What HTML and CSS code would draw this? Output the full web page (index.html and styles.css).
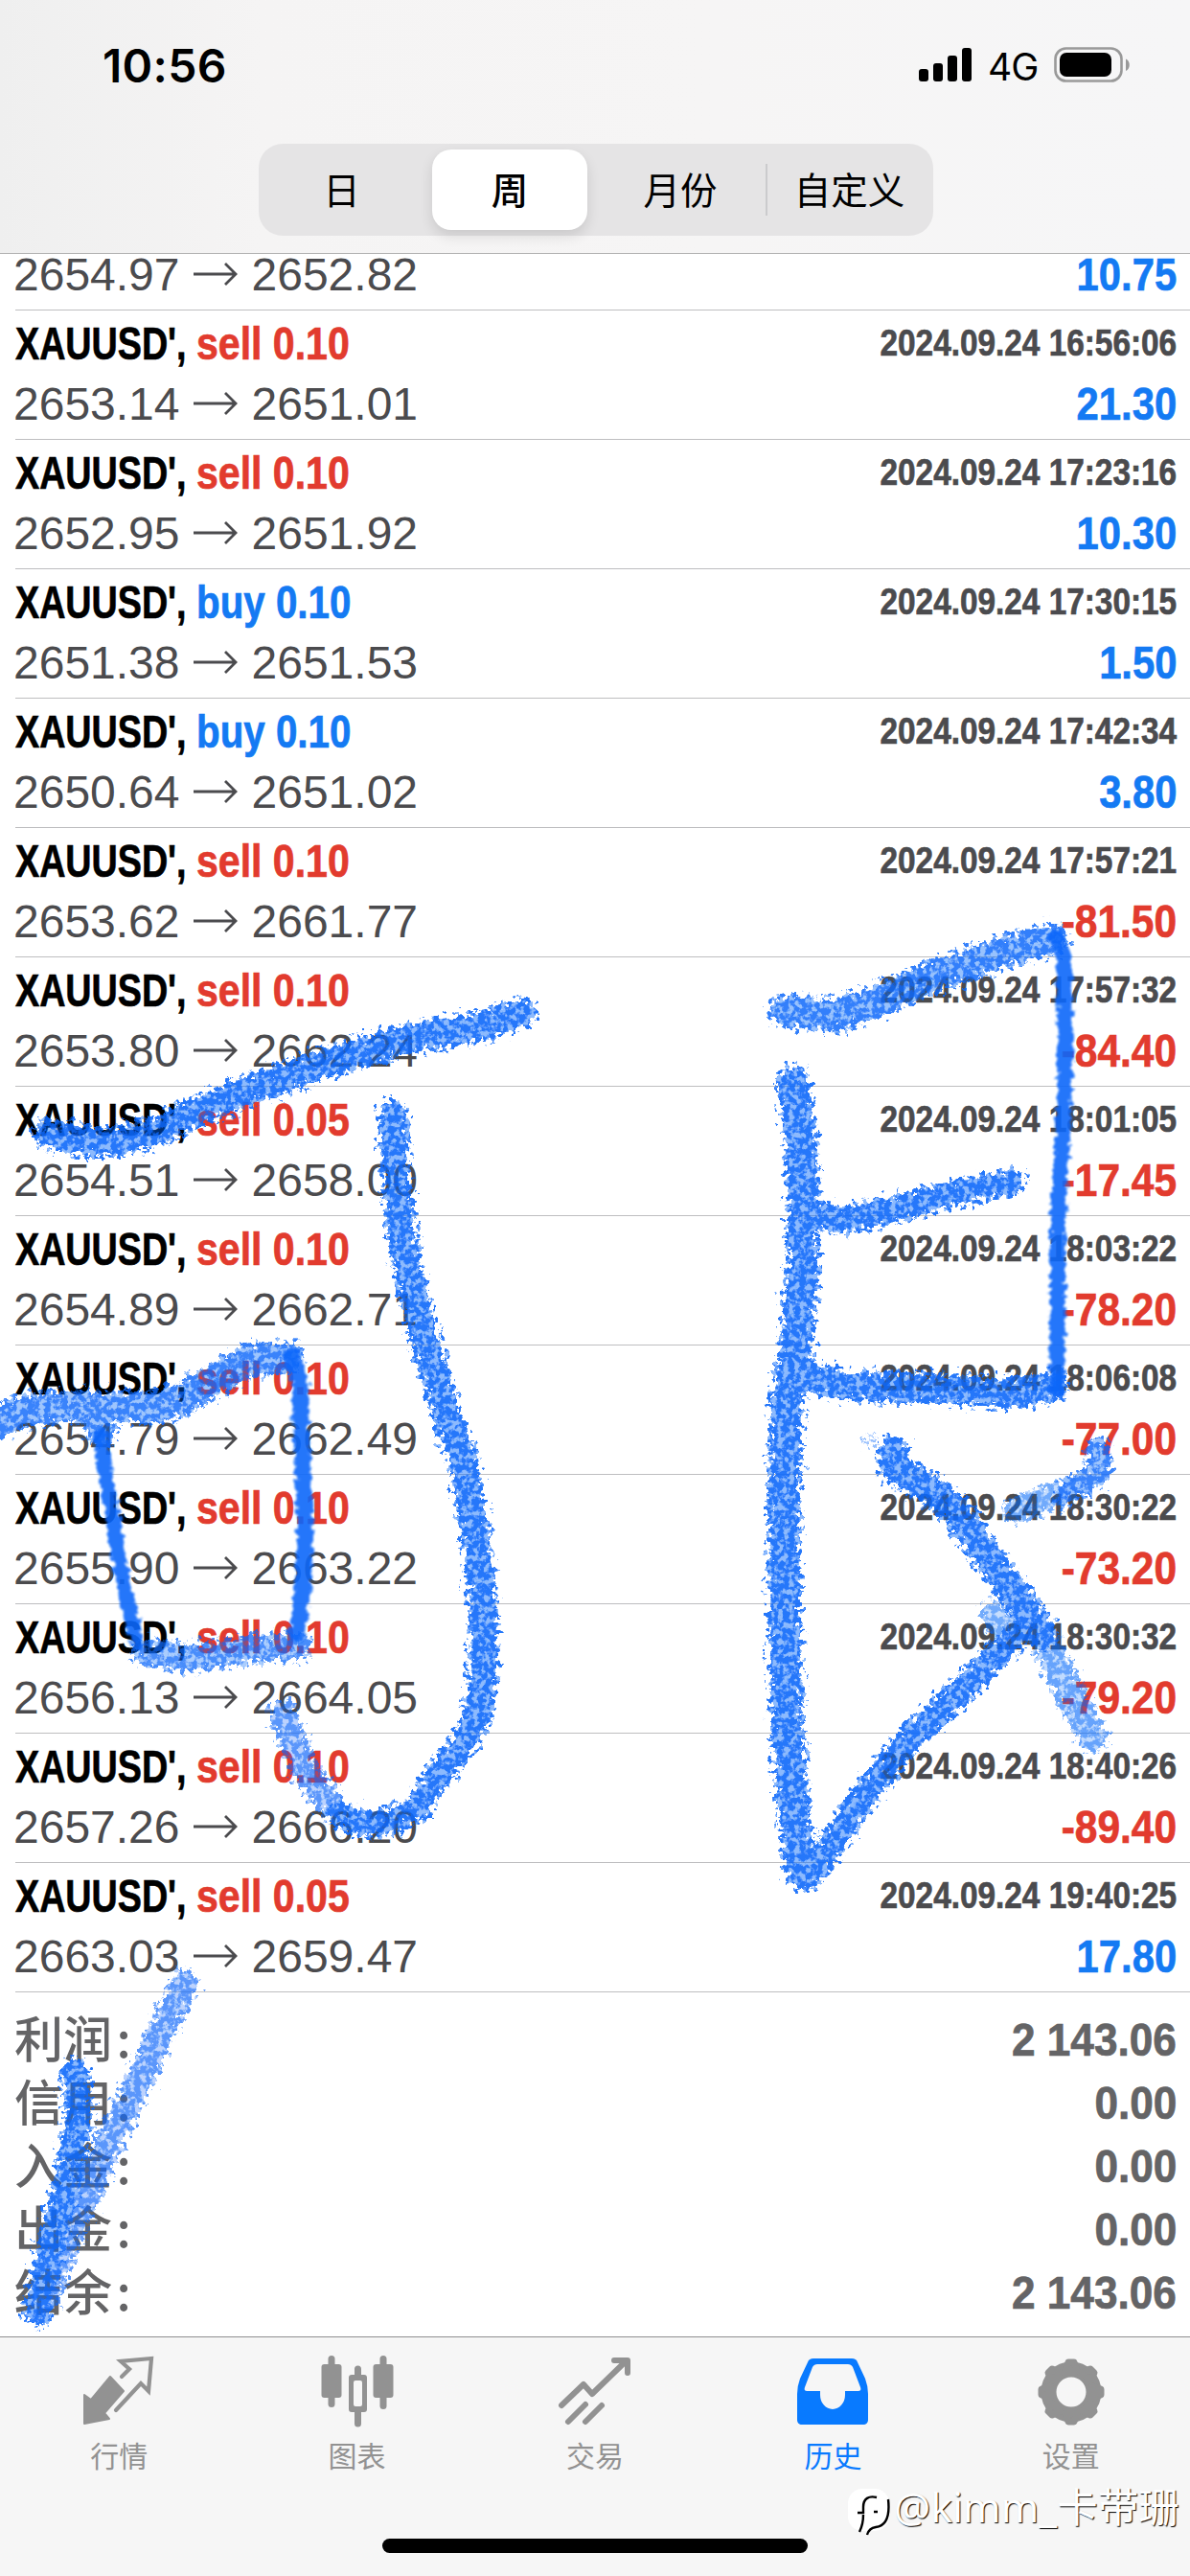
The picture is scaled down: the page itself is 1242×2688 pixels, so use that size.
FILE: index.html
```html
<!DOCTYPE html>
<html lang="zh-CN">
  <head>
    <meta charset="UTF-8" />
    <meta name="viewport" content="width=device-width, initial-scale=1.0" />
    <title>历史</title>
    <link rel="stylesheet" href="styles.css">
  </head>
  <body>
    <div class="screen">
      <header class="header">
        <div class="status-bar">
          <span class="time">10:56</span>
          <div class="status-icons">
            <svg class="signal" viewBox="0 0 56 36">
              <rect x="0" y="22" width="10" height="13" rx="3" />
              <rect x="15" y="16" width="10" height="19" rx="3" />
              <rect x="30" y="8" width="10" height="27" rx="3" />
              <rect x="45" y="0" width="10" height="35" rx="3" />
            </svg>
            <span class="network">4G</span>
            <svg class="battery" viewBox="0 0 80 38">
              <rect x="1.5" y="1.5" width="69" height="34" rx="11" fill="none" stroke="#999" stroke-width="2.6" />
              <rect x="6" y="6" width="54" height="25" rx="7" />
              <path d="M75 12.5c5 2 5 10.500 0 12.500z" fill="#999" />
            </svg>
          </div>
        </div>
        <div class="segments">
          <div class="segment">日</div>
          <div class="segment active">周</div>
          <div class="segment">月份</div>
          <div class="segment divided">自定义</div>
        </div>
      </header>

      <main class="history">
        <div class="deal deal-cut">
          <div class="line">
            <span class="prices">2654.97<svg class="arrow" viewBox="0 0 48 24"><path d="M1 12h44M34 1l11 11-11 11" /></svg>2652.82</span>
            <span class="profit">10.75</span>
          </div>
        </div>
        <div class="deal">
          <div class="line"><span class="symbol">XAUUSD',</span><span class="side sell">sell 0.10</span><span class="date">2024.09.24 16:56:06</span></div>
          <div class="line"><span class="prices">2653.14<svg class="arrow" viewBox="0 0 48 24"><path d="M1 12h44M34 1l11 11-11 11" /></svg>2651.01</span><span class="profit">21.30</span></div>
        </div>
        <div class="deal">
          <div class="line"><span class="symbol">XAUUSD',</span><span class="side sell">sell 0.10</span><span class="date">2024.09.24 17:23:16</span></div>
          <div class="line"><span class="prices">2652.95<svg class="arrow" viewBox="0 0 48 24"><path d="M1 12h44M34 1l11 11-11 11" /></svg>2651.92</span><span class="profit">10.30</span></div>
        </div>
        <div class="deal">
          <div class="line"><span class="symbol">XAUUSD',</span><span class="side buy">buy 0.10</span><span class="date">2024.09.24 17:30:15</span></div>
          <div class="line"><span class="prices">2651.38<svg class="arrow" viewBox="0 0 48 24"><path d="M1 12h44M34 1l11 11-11 11" /></svg>2651.53</span><span class="profit">1.50</span></div>
        </div>
        <div class="deal">
          <div class="line"><span class="symbol">XAUUSD',</span><span class="side buy">buy 0.10</span><span class="date">2024.09.24 17:42:34</span></div>
          <div class="line"><span class="prices">2650.64<svg class="arrow" viewBox="0 0 48 24"><path d="M1 12h44M34 1l11 11-11 11" /></svg>2651.02</span><span class="profit">3.80</span></div>
        </div>
        <div class="deal">
          <div class="line"><span class="symbol">XAUUSD',</span><span class="side sell">sell 0.10</span><span class="date">2024.09.24 17:57:21</span></div>
          <div class="line"><span class="prices">2653.62<svg class="arrow" viewBox="0 0 48 24"><path d="M1 12h44M34 1l11 11-11 11" /></svg>2661.77</span><span class="profit loss">-81.50</span></div>
        </div>
        <div class="deal">
          <div class="line"><span class="symbol">XAUUSD',</span><span class="side sell">sell 0.10</span><span class="date">2024.09.24 17:57:32</span></div>
          <div class="line"><span class="prices">2653.80<svg class="arrow" viewBox="0 0 48 24"><path d="M1 12h44M34 1l11 11-11 11" /></svg>2662.24</span><span class="profit loss">-84.40</span></div>
        </div>
        <div class="deal">
          <div class="line"><span class="symbol">XAUUSD',</span><span class="side sell">sell 0.05</span><span class="date">2024.09.24 18:01:05</span></div>
          <div class="line"><span class="prices">2654.51<svg class="arrow" viewBox="0 0 48 24"><path d="M1 12h44M34 1l11 11-11 11" /></svg>2658.00</span><span class="profit loss">-17.45</span></div>
        </div>
        <div class="deal">
          <div class="line"><span class="symbol">XAUUSD',</span><span class="side sell">sell 0.10</span><span class="date">2024.09.24 18:03:22</span></div>
          <div class="line"><span class="prices">2654.89<svg class="arrow" viewBox="0 0 48 24"><path d="M1 12h44M34 1l11 11-11 11" /></svg>2662.71</span><span class="profit loss">-78.20</span></div>
        </div>
        <div class="deal">
          <div class="line"><span class="symbol">XAUUSD',</span><span class="side sell">sell 0.10</span><span class="date">2024.09.24 18:06:08</span></div>
          <div class="line"><span class="prices">2654.79<svg class="arrow" viewBox="0 0 48 24"><path d="M1 12h44M34 1l11 11-11 11" /></svg>2662.49</span><span class="profit loss">-77.00</span></div>
        </div>
        <div class="deal">
          <div class="line"><span class="symbol">XAUUSD',</span><span class="side sell">sell 0.10</span><span class="date">2024.09.24 18:30:22</span></div>
          <div class="line"><span class="prices">2655.90<svg class="arrow" viewBox="0 0 48 24"><path d="M1 12h44M34 1l11 11-11 11" /></svg>2663.22</span><span class="profit loss">-73.20</span></div>
        </div>
        <div class="deal">
          <div class="line"><span class="symbol">XAUUSD',</span><span class="side sell">sell 0.10</span><span class="date">2024.09.24 18:30:32</span></div>
          <div class="line"><span class="prices">2656.13<svg class="arrow" viewBox="0 0 48 24"><path d="M1 12h44M34 1l11 11-11 11" /></svg>2664.05</span><span class="profit loss">-79.20</span></div>
        </div>
        <div class="deal">
          <div class="line"><span class="symbol">XAUUSD',</span><span class="side sell">sell 0.10</span><span class="date">2024.09.24 18:40:26</span></div>
          <div class="line"><span class="prices">2657.26<svg class="arrow" viewBox="0 0 48 24"><path d="M1 12h44M34 1l11 11-11 11" /></svg>2666.20</span><span class="profit loss">-89.40</span></div>
        </div>
        <div class="deal">
          <div class="line"><span class="symbol">XAUUSD',</span><span class="side sell">sell 0.05</span><span class="date">2024.09.24 19:40:25</span></div>
          <div class="line"><span class="prices">2663.03<svg class="arrow" viewBox="0 0 48 24"><path d="M1 12h44M34 1l11 11-11 11" /></svg>2659.47</span><span class="profit">17.80</span></div>
        </div>

        <div class="summary">
          <div class="total"><span>利润 :</span><b>2 143.06</b></div>
          <div class="total"><span>信用 :</span><b>0.00</b></div>
          <div class="total"><span>入金 :</span><b>0.00</b></div>
          <div class="total"><span>出金 :</span><b>0.00</b></div>
          <div class="total"><span>结余 :</span><b>2 143.06</b></div>
        </div>
      </main>

      <footer class="footer">
        <nav class="tabs">
          <div class="tab">
            <svg class="icon" viewBox="0 0 76 76">
              <path d="M2 41l7 5 20-24 14 15-20 23 5 6-26 5z" fill="currentColor" stroke="currentColor" stroke-width="2" stroke-linejoin="round" />
              <path d="M41 22l8-8-9-8 32-3-3 34-8-8-26 28" fill="none" stroke="currentColor" stroke-width="4.200" stroke-linecap="round" />
            </svg>
            <span>行情</span>
          </div>
          <div class="tab">
            <svg class="icon" viewBox="0 0 76 76">
              <g fill="currentColor">
                <rect x="0.500" y="9" width="21" height="35" rx="3" />
                <rect x="7.500" y="0" width="7" height="54" rx="3.500" />
                <rect x="54.500" y="9" width="21" height="35" rx="3" />
                <rect x="61.500" y="0" width="7" height="56" rx="3.500" />
                <path d="M35 20v-6a3.500 3.500 0 0 1 7 0v6h3a3 3 0 0 1 3 3v33a3 3 0 0 1-3 3h-3v12a3.500 3.500 0 0 1-7 0v-12h-3a3 3 0 0 1-3-3v-33a3 3 0 0 1 3-3zm-1 8v23a2 2 0 0 0 2 2h5a2 2 0 0 0 2-2v-23a2 2 0 0 0-2-2h-5a2 2 0 0 0-2 2z" fill-rule="evenodd" />
              </g>
            </svg>
            <span>图表</span>
          </div>
          <div class="tab">
            <svg class="icon" viewBox="0 0 76 76">
              <g fill="none" stroke="currentColor" stroke-width="6" stroke-linecap="round" stroke-linejoin="round">
                <path d="M3 52l23-22 9 10 34-33" />
                <path d="M58 5h14v13" />
                <path d="M10 69l18-18M28 69l17-17" />
              </g>
            </svg>
            <span>交易</span>
          </div>
          <div class="tab active">
            <svg class="icon" viewBox="0 0 76 76">
              <path fill="currentColor" fill-rule="evenodd" d="M18 3h40c3 0 5 1 6 4l8 17q3 8 3 16v27c0 3-2 5-5 5H6c-3 0-5-2-5-5V40q0-8 3-16l8-17c1-3 3-4 6-4zM22 9c-2 0-4 1-5 3L9 33c-1 3 0 4 3 4h13v4a13 15 0 0 0 26 0v-4h13c3 0 4-1 3-4l-8-21c-1-2-3-3-5-3z" />
            </svg>
            <span>历史</span>
          </div>
          <div class="tab">
            <svg class="icon" viewBox="0 0 76 76">
              <g fill="none" stroke="currentColor">
                <circle cx="38" cy="38" r="23.500" stroke-width="16" />
                <path d="M35 7h6l3 9H32zM35 69h6l3-9H32zM7 35v6l9 3V32zM69 35v6l-9 3V32zM14 18l4-4 8 4-8 8zM62 58l-4 4-8-4 8-8zM14 58l4 4 8-4-8-8zM62 18l-4-4-8 4 8 8z" fill="currentColor" stroke-width="7" stroke-linejoin="round" />
              </g>
            </svg>
            <span>设置</span>
          </div>
        </nav>
        <div class="home-indicator"></div>
      </footer>

      <div class="watermark">
        <svg class="mark" viewBox="0 0 46 52">
          <rect x="1" y="2" width="43" height="44" rx="15" fill="#fff" />
          <path d="M43 13q3 27-13 29-7 1-9 8M31 11c-8-2-14 1-14 10v6h-6M17 29q0 10-4 18M28 26h4" />
        </svg>
        <span>@kimm_卡带珊</span>
      </div>

      <!-- crayon marks over the list -->
      <svg class="crayon" viewBox="0 0 1242 2688">
        <defs>
          <filter id="chalk" filterUnits="userSpaceOnUse" x="0" y="900" width="1242" height="1560">
            <feTurbulence type="fractalNoise" baseFrequency="0.17" numOctaves="3" seed="4" result="noise" />
            <feDisplacementMap in="SourceGraphic" in2="noise" scale="26" xChannelSelector="R" yChannelSelector="G" result="rough" />
            <feColorMatrix in="noise" type="matrix" values="0 0 0 0 0  0 0 0 0 0  0 0 0 0 0  0 0 0 6 -2.2" result="grain" />
            <feComposite in="rough" in2="grain" operator="in" result="dots" />
            <feComponentTransfer in="rough" result="wash">
              <feFuncA type="linear" slope="0.5" />
            </feComponentTransfer>
            <feMerge result="marks">
              <feMergeNode in="wash" />
              <feMergeNode in="dots" />
            </feMerge>
            <feGaussianBlur in="marks" stdDeviation="0.7" />
          </filter>
          <filter id="press" filterUnits="userSpaceOnUse" x="0" y="900" width="1242" height="1560">
            <feTurbulence type="fractalNoise" baseFrequency="0.17" numOctaves="2" seed="9" result="noise" />
            <feDisplacementMap in="SourceGraphic" in2="noise" scale="12" xChannelSelector="R" yChannelSelector="G" result="rough" />
            <feGaussianBlur in="rough" stdDeviation="0.8" />
          </filter>
        </defs>
        <g filter="url(#chalk)">
          <path stroke-width="31" d="M52 1183L85 1190 119 1191 166 1180 205 1160 246 1143 337 1110 432 1083 500 1072 544 1057" />
          <path stroke-width="30" d="M410 1163L412 1217 420 1290 430 1345 442 1390 467 1480 483 1523 495 1594 505 1684 503 1766 496 1797" />
          <path stroke-width="27" d="M496 1797L478 1827 455 1855 437 1885 410 1900 380 1905 355 1893" />
          <path stroke-width="28" opacity=".65" d="M349 1888L320 1850 295 1788" />
          <path stroke-width="33" opacity=".85" d="M0 1482L35 1470 79 1467 158 1469 190 1460 222 1441 260 1420 300 1416M104 1475L106 1492" />
          <path stroke-width="28" opacity=".75" d="M152 1724L198 1730 253 1722 311 1717" />
          <path stroke-width="33" opacity=".9" d="M819 1055L873 1060 920 1042 980 1017 1040 996 1098 980" />
          <path stroke-width="34" d="M828 1130L836 1190 838 1257 838 1323 829 1423 821 1461 818 1583 819 1690 821 1797 829 1897 837 1955" />
          <path stroke-width="27" d="M845 1957L870 1922 900 1876 953 1811 1007 1761 1060 1706" />
          <path stroke-width="32" d="M932 1514L935 1533 967 1552 997 1576 1027 1619 1063 1669 1087 1704" />
          <path stroke-width="31" opacity=".55" d="M1087 1704L1107 1747 1141 1814" />
          <path stroke-width="25" opacity=".85" d="M1146 1512L1147 1536 1113 1558" />
          <path stroke-width="27" opacity=".5" d="M1113 1558L1060 1575M1036 1684L1054 1708" />
          <path stroke-width="27" d="M845 1262L873 1274 930 1263 997 1245 1056 1233" />
          <path stroke-width="31" d="M830 1433L880 1446 1000 1450 1063 1454 1099 1446" />
          <path stroke-width="29" d="M78 2162L82 2207 71 2273 53 2340 39 2413" />
          <path stroke-width="28" opacity=".65" d="M193 2069L170 2117 147 2167 115 2233 91 2290 62 2357 47 2400" />
          <path stroke-width="6" opacity=".35" d="M899 1501l3 3M909 1499l2 2M907 1507l1 1" />
        </g>
        <g filter="url(#press)">
          <path stroke-width="17" d="M304 1414L313 1440 314 1487 319 1594 316 1659 310 1705" />
          <path stroke-width="15" d="M104 1498L113 1555 126 1637 143 1712" />
          <path stroke-width="16" d="M1103 978L1111 1000 1112 1107 1109 1190 1104 1273 1104 1357 1103 1450" />
        </g>
      </svg>
    </div>
  </body>
</html>
```

FILE: styles.css
```css
* {
  margin: 0;
  padding: 0;
  box-sizing: border-box;
}

body {
  background: #fff;
  font-family: "Liberation Sans", "Noto Sans CJK SC", sans-serif;
  color: #000;
}

.screen {
  position: relative;
  display: flex;
  flex-direction: column;
  width: 1242px;
  height: 2688px;
  overflow: hidden;
}

/* Header */
.header {
  height: 265px;
  background: linear-gradient(90deg, #efefef 0, #f5f4f4 22%, #f6f5f5 60%, #f6f6f7 100%);
  border-bottom: 1px solid #b2b2b2;
}

.status-bar {
  display: flex;
  justify-content: space-between;
  height: 150px;
  padding: 38px 62px 0 107px;
}

.time {
  font-family: Inter, sans-serif;
  font-size: 48px;
  font-weight: 600;
  line-height: 62px;
  letter-spacing: 0.3px;
}

.status-icons {
  display: flex;
  align-items: flex-start;
}

.signal {
  width: 56px;
  height: 36px;
  margin-top: 12px;
}

.network {
  width: 54px;
  margin: 2px 15px 0 16px;
  font-family: Inter, sans-serif;
  font-size: 39px;
  font-weight: 400;
  line-height: 60px;
  letter-spacing: -1px;
}

.battery {
  width: 80px;
  height: 38px;
  margin-top: 11px;
}

.segments {
  display: grid;
  grid-template-columns: 173px 178px 178px 1fr;
  width: 704px;
  height: 96px;
  margin-left: 270px;
  padding: 6px 0;
  border-radius: 25px;
  background: #e5e4e5;
}

.segment {
  display: flex;
  align-items: center;
  justify-content: center;
  height: 84px;
  padding-bottom: 4px;
  font-family: "Noto Sans CJK SC", sans-serif;
  font-size: 38.5px;
  line-height: 80px;
}

.segment.active {
  margin: 0 8px;
  border-radius: 20px;
  background: #fff;
  box-shadow: 0 6px 14px rgba(0, 0, 0, 0.12);
  font-weight: 500;
}

.segment.divided {
  background: linear-gradient(#cbcbcd, #cbcbcd) 0 15px / 2px 54px no-repeat;
}

/* Deals */
.history {
  height: 2173px;
  padding-left: 16px;
}

.deal {
  height: 135px;
  padding: 3px 14px 0 0;
  border-bottom: 1px solid #bebec0;
}

.line {
  display: flex;
  align-items: flex-start;
  height: 63px;
  font-size: 48px;
  line-height: 63px;
  white-space: nowrap;
}

.deal-cut {
  height: 59px;
  padding-top: 0;
}

.deal-cut .line {
  height: 43px;
  line-height: 43px;
}

.symbol,
.side,
.date,
.profit {
  font-weight: 700;
  -webkit-text-stroke: 0.7px currentColor;
}

.symbol {
  width: 189px;
  transform: scaleX(0.785);
  transform-origin: left;
}

.side {
  transform: scaleX(0.855);
  transform-origin: left;
}

.sell {
  color: #e23b2e;
}

.buy {
  color: #147af3;
  transform: scaleX(0.84);
}

.date {
  margin-left: auto;
  color: #4b4b4e;
  font-size: 39px;
  line-height: 61px;
  transform: scaleX(0.855);
  transform-origin: right;
}

.prices {
  margin-left: -2px;
  color: #4b4b4e;
}

.arrow {
  width: 48px;
  height: 24px;
  margin: 0 14px 5px 13px;
  fill: none;
  stroke: #4b4b4e;
  stroke-width: 2.8;
}

.profit {
  margin-left: auto;
  color: #147af3;
  transform: scaleX(0.87);
  transform-origin: right;
}

.profit.loss {
  color: #e23b2e;
  transform: scaleX(0.885);
}

/* Totals */
.summary {
  padding: 14px 14px 0 0;
}

.total {
  display: flex;
  justify-content: space-between;
  height: 66px;
  color: #646466;
  font-size: 48px;
  line-height: 71px;
}

.total span {
  margin-left: -1px;
  font-family: "Noto Sans CJK SC", sans-serif;
  font-size: 51px;
  font-weight: 500;
  line-height: 64px;
  word-spacing: -7px;
}

.total b {
  -webkit-text-stroke: 0.7px currentColor;
  transform: scaleX(0.92);
  transform-origin: right;
}

/* Tab bar */
.footer {
  height: 250px;
  background: #f6f6f6;
  border-top: 1px solid #8e8e90;
}

.tabs {
  display: grid;
  grid-template-columns: repeat(5, 1fr);
  height: 210px;
}

.tab {
  display: flex;
  flex-direction: column;
  align-items: center;
  padding-top: 19px;
  color: #929292;
  font-family: "Noto Sans CJK SC", sans-serif;
  font-size: 30px;
  line-height: 44px;
}

.tab span {
  margin-top: 5px;
}

.tab.active {
  color: #087aff;
}

.icon {
  width: 76px;
  height: 76px;
}

.home-indicator {
  width: 444px;
  height: 15px;
  margin: 0 auto;
  border-radius: 8px;
  background: #000;
}

.watermark {
  position: absolute;
  top: 2588px;
  left: 884px;
  display: flex;
  align-items: flex-start;
  color: #fff;
  font-family: "Noto Sans", "Noto Sans CJK SC", sans-serif;
  font-size: 42.5px;
  line-height: 56px;
  text-shadow: 1px 1px 1px #000;
  white-space: nowrap;
}

.mark {
  width: 46px;
  height: 52px;
  margin: 7px 3px 0 0;
}

.mark path {
  fill: none;
  stroke: #000;
  stroke-width: 2.4;
}

.crayon {
  position: absolute;
  top: 0;
  left: 0;
  width: 1242px;
  height: 2688px;
  pointer-events: none;
}

.crayon path {
  fill: none;
  stroke: #0a68fa;
  stroke-linejoin: round;
  stroke-linecap: round;
}

.crayon g {
  opacity: 0.9;
}
```
